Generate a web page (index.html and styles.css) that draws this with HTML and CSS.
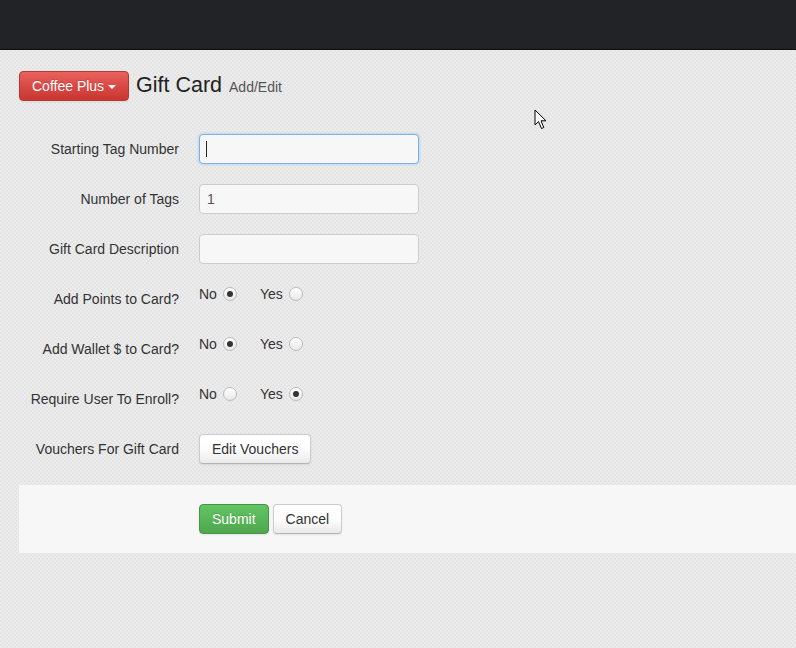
FILE: index.html
```html
<!DOCTYPE html>
<html lang="en">
<head>
    <meta charset="UTF-8">
    <meta name="viewport" content="width=device-width, initial-scale=1.0">
    <title>Gift Card Add/Edit</title>
    <link rel="stylesheet" href="styles.css">
</head>
<body>

<div class="navbar"></div>

<div class="container">
    <div class="page-title">
        <button type="button" class="btn btn-danger">Coffee Plus <span class="caret"></span></button>
        <h1>Gift Card <small>Add/Edit</small></h1>
    </div>

    <form class="form-horizontal">
        <div class="control-group">
            <label class="control-label" for="start_tag">Starting Tag Number</label>
            <div class="controls">
                <span class="input-wrap">
                    <input type="text" id="start_tag" class="focused">
                    <span class="text-caret"></span>
                </span>
            </div>
        </div>
        <div class="control-group">
            <label class="control-label" for="num_tags">Number of Tags</label>
            <div class="controls">
                <input type="text" id="num_tags" value="1">
            </div>
        </div>
        <div class="control-group">
            <label class="control-label" for="description">Gift Card Description</label>
            <div class="controls">
                <input type="text" id="description">
            </div>
        </div>
        <div class="control-group">
            <label class="control-label">Add Points to Card?</label>
            <div class="controls radios">
                <label class="radio">No <span class="radio-box checked"></span></label>
                <label class="radio">Yes <span class="radio-box"></span></label>
            </div>
        </div>
        <div class="control-group">
            <label class="control-label">Add Wallet $ to Card?</label>
            <div class="controls radios">
                <label class="radio">No <span class="radio-box checked"></span></label>
                <label class="radio">Yes <span class="radio-box"></span></label>
            </div>
        </div>
        <div class="control-group">
            <label class="control-label">Require User To Enroll?</label>
            <div class="controls radios">
                <label class="radio">No <span class="radio-box"></span></label>
                <label class="radio">Yes <span class="radio-box checked"></span></label>
            </div>
        </div>
        <div class="control-group">
            <label class="control-label">Vouchers For Gift Card</label>
            <div class="controls">
                <button type="button" class="btn">Edit Vouchers</button>
            </div>
        </div>

        <div class="form-actions">
            <button type="submit" class="btn btn-success">Submit</button>
            <button type="button" class="btn">Cancel</button>
        </div>
    </form>
</div>

<svg class="mouse" width="14" height="22" viewBox="0 0 14 22">
    <path d="M1 1 L1 16 L4.5 12.5 L7.5 19.5 L9.8 18.5 L7 11.8 L12 11.8 Z" fill="#fff" stroke="#000" stroke-width="1" stroke-linejoin="miter"/>
</svg>

</body>
</html>
```

FILE: styles.css
```css
body {
    margin: 0;
    font-family: "Liberation Sans", Arial, sans-serif;
    font-size: 14px;
    color: #333;
    background: repeating-conic-gradient(#ececec 0 25%, #e4e4e4 0 50%) 0 0 / 4px 4px;
    overflow: hidden;
}
.navbar {
    height: 49px;
    background: #222326;
    border-bottom: 1px solid #0e0e10;
}
.container {
    padding: 20px 0 0 19px;
}
.page-title {
    display: flex;
    align-items: center;
}
.page-title h1 {
    margin: 0 0 0 7px;
    font-size: 21.5px;
    font-weight: normal;
    color: #222;
    line-height: 30px;
}
.page-title h1 small {
    font-size: 14px;
    color: #555;
    margin-left: 1px;
}
.btn {
    display: inline-block;
    height: 30px;
    padding: 0 12px;
    font-family: inherit;
    font-size: 14px;
    line-height: 28px;
    color: #333;
    background: linear-gradient(#fff 0%, #fdfdfd 50%, #eaeaea 100%);
    border: 1px solid #ccc;
    border-bottom-color: #b3b3b3;
    border-radius: 4px;
    box-shadow: 0 1px 2px rgba(0,0,0,0.08);
    cursor: pointer;
}
.btn-danger {
    color: #fff;
    background: linear-gradient(#e9605c, #c9352f);
    border-color: #b53a33;
    text-shadow: 0 -1px 0 rgba(0,0,0,0.15);
}
.btn-success {
    color: #fff;
    background: linear-gradient(#62c462, #4fa74f);
    border-color: #469446;
    text-shadow: 0 -1px 0 rgba(0,0,0,0.15);
}
.caret {
    display: inline-block;
    width: 0;
    height: 0;
    vertical-align: middle;
    border-top: 4px solid #fff;
    border-left: 4px solid transparent;
    border-right: 4px solid transparent;
}
.form-horizontal {
    margin-top: 32px;
}
.control-group {
    display: flex;
    height: 30px;
    margin-bottom: 20px;
}
.control-label {
    width: 160px;
    text-align: right;
    line-height: 30px;
    margin-right: 20px;
}
.controls input[type="text"] {
    box-sizing: border-box;
    width: 220px;
    height: 30px;
    padding: 4px 7px;
    font-family: inherit;
    font-size: 14px;
    color: #555;
    background: #f7f7f7;
    border: 1px solid #ccc;
    border-radius: 4px;
    outline: none;
}
.controls input.focused {
    border-color: #74b3ee;
    box-shadow: 0 0 3px rgba(102,175,233,0.6);
}
.input-wrap {
    position: relative;
    display: inline-block;
}
.text-caret {
    position: absolute;
    left: 7px;
    top: 7px;
    width: 1px;
    height: 16px;
    background: #222;
}
.radios {
    display: flex;
    gap: 23px;
    line-height: 20px;
}
.radio {
    display: flex;
    align-items: center;
    gap: 6px;
    height: 20px;
}
.radio-box {
    box-sizing: border-box;
    display: inline-block;
    position: relative;
    width: 14px;
    height: 14px;
    border: 1px solid #bbb;
    border-radius: 50%;
    background: linear-gradient(#fff, #e8e8e8);
}
.radio-box.checked::after {
    content: "";
    position: absolute;
    left: 3px;
    top: 3px;
    width: 6px;
    height: 6px;
    border-radius: 50%;
    background: #333;
}
.form-actions {
    margin-top: 21px;
    padding: 19px 0 19px 180px;
    background: #f7f7f7;
    display: flex;
    gap: 4px;
}
.mouse {
    position: absolute;
    left: 534px;
    top: 109px;
}
```
